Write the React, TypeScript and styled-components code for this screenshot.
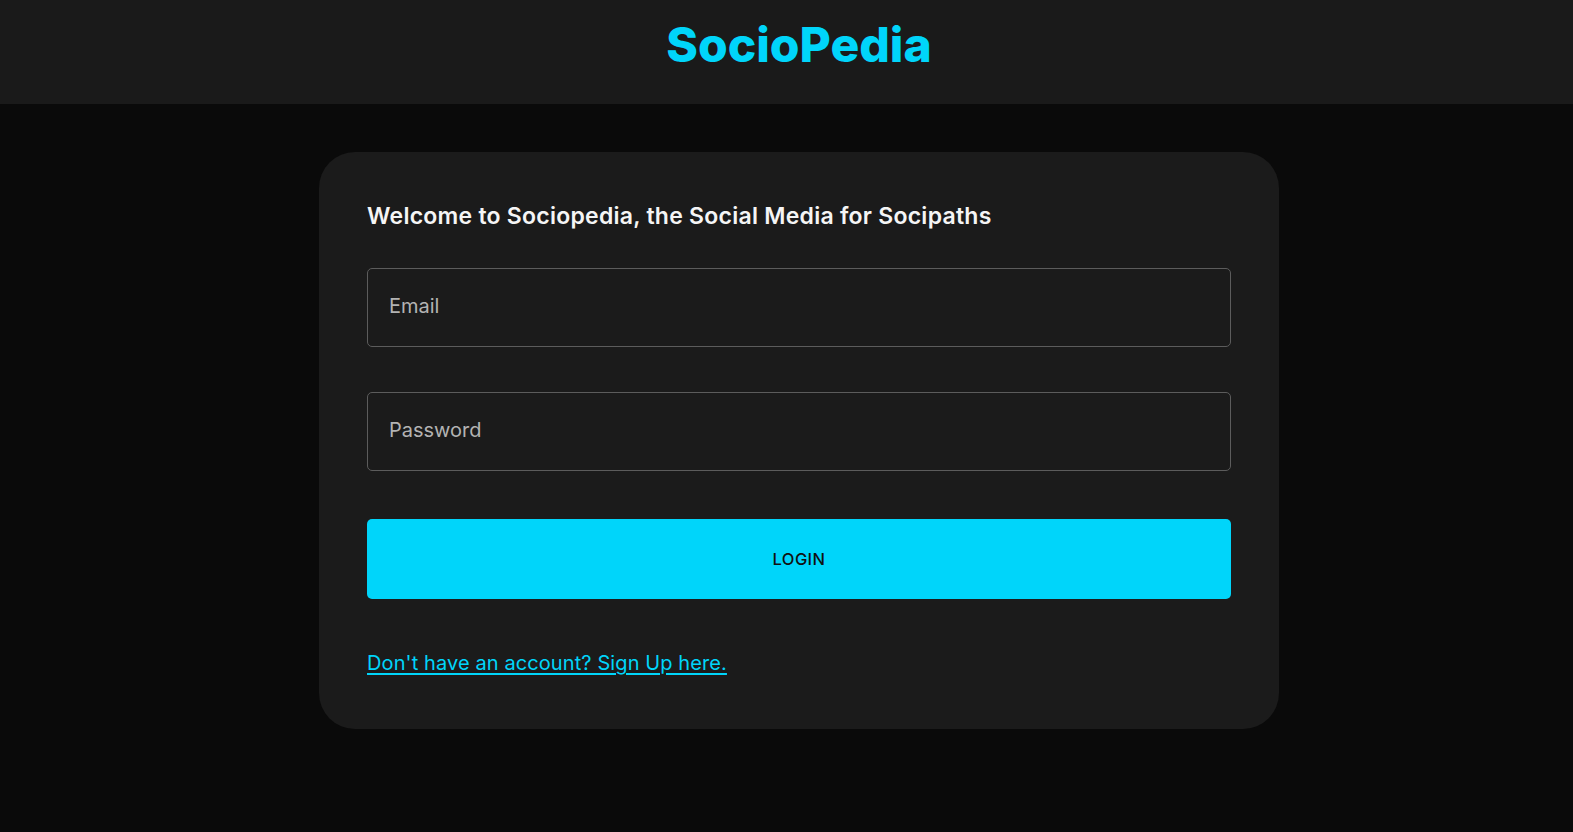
import styled, { createGlobalStyle } from "styled-components";

const GlobalStyle = createGlobalStyle`
  html, body {
    margin: 0;
    padding: 0;
    background: #0a0a0a;
    font-family: Inter, "Noto Sans", sans-serif;
  }
  * {
    box-sizing: border-box;
  }
`;

const Page = styled.div`
  min-height: 100vh;
  background: #0a0a0a;
`;

// the original layout sits slightly right of centre, so both rows carry the same left inset
const Navbar = styled.header`
  height: 104px;
  padding-left: 25px;
  background: #1a1a1a;
  display: flex;
  align-items: center;
  justify-content: center;
`;

const Logo = styled.h1`
  margin: 0;
  font-size: 48px;
  font-weight: 800;
  color: #00d5fa;
  letter-spacing: 0;
  padding-bottom: 16px;
`;

const Main = styled.div`
  padding: 48px 0 48px 25px;
`;

const Card = styled.main`
  width: 960px;
  margin: 0 auto;
  padding: 48px 48px 51px;
  background: #1b1b1b;
  border-radius: 36px;
`;

const Heading = styled.h5`
  margin: 0 0 36px;
  font-size: 23px;
  font-weight: 600;
  line-height: 32px;
  color: #f5f5f5;
  letter-spacing: 0.25px;
`;

const Form = styled.form`
  display: flex;
  flex-direction: column;
  gap: 45px;
`;

const Input = styled.input`
  width: 100%;
  height: 79px;
  padding: 0 21px 3px;
  background: transparent;
  border: 1px solid #5c5c5c;
  border-radius: 5px;
  font-family: inherit;
  font-size: 20px;
  color: #e0e0e0;
  outline: none;

  &::placeholder {
    color: #b3b3b3;
  }
`;

const Button = styled.button`
  height: 80px;
  margin-top: 3px;
  border: none;
  border-radius: 5px;
  background: #00d5fa;
  color: #111;
  font-family: inherit;
  font-size: 16.5px;
  font-weight: 500;
  letter-spacing: 0.4px;
  cursor: pointer;
`;

const SignUp = styled.a`
  display: inline-block;
  margin-top: 49px;
  font-size: 20px;
  line-height: 30px;
  letter-spacing: 0.1px;
  color: #00d5fa;
  text-decoration: underline;
  text-underline-offset: 3px;
  cursor: pointer;
`;

export default function App() {
  return (
    <Page>
      <GlobalStyle />
      <Navbar>
        <Logo>SocioPedia</Logo>
      </Navbar>
      <Main>
        <Card>
          <Heading>Welcome to Sociopedia, the Social Media for Socipaths</Heading>
          <Form onSubmit={(e) => e.preventDefault()}>
            <Input type="email" placeholder="Email" />
            <Input type="password" placeholder="Password" />
            <Button type="submit">LOGIN</Button>
          </Form>
          <SignUp>Don't have an account? Sign Up here.</SignUp>
        </Card>
      </Main>
    </Page>
  );
}
